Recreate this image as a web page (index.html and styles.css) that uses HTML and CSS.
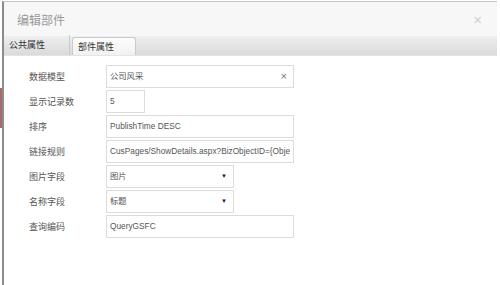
FILE: index.html
```html
<!DOCTYPE html>
<html lang="zh-CN">
<head>
    <meta charset="UTF-8">
    <title>编辑部件</title>
    <link rel="stylesheet" href="styles.css">
</head>
<body>
    <div class="dialog">
        <div class="dialog-header">
            <h1>编辑部件</h1>
            <span class="close-btn">&times;</span>
        </div>

        <div class="tabs">
            <div class="tab">公共属性</div>
            <div class="tab active">部件属性</div>
        </div>

        <div class="form">
            <label>数据模型</label>
            <div class="field wide clearable">公司风采<span class="clear">&times;</span></div>

            <label>显示记录数</label>
            <div class="field short">5</div>

            <label>排序</label>
            <div class="field wide">PublishTime DESC</div>

            <label>链接规则</label>
            <div class="field wide">CusPages/ShowDetails.aspx?BizObjectID={Obje</div>

            <label>图片字段</label>
            <div class="field select">图片<span class="arrow">&#9660;</span></div>

            <label>名称字段</label>
            <div class="field select">标题<span class="arrow">&#9660;</span></div>

            <label>查询编码</label>
            <div class="field wide">QueryGSFC</div>
        </div>
    </div>
</body>
</html>
```

FILE: styles.css
```css
* {
    margin: 0;
    padding: 0;
    box-sizing: border-box;
}

body {
    font-family: "Liberation Sans", "Noto Sans CJK SC", sans-serif;
    background: linear-gradient(to bottom, #fff 0, #fff 88px, #a86a6a 88px, #a86a6a 128px, #fff 128px);
    background-size: 2px 100%;
    background-repeat: no-repeat;
    background-color: #fff;
    height: 285px;
    padding: 1px 3px 0 2px;
    overflow: hidden;
}

.dialog {
    height: 100%;
    border-left: 2px solid #8c8c8c;
    border-top: 1px solid #c4c4c4;
    background: #fff;
}

.dialog-header {
    height: 34px;
    background: #f7f7f7;
    display: flex;
    align-items: center;
    justify-content: space-between;
    padding: 0 15px 0 13px;
}

.dialog-header h1 {
    font-size: 12px;
    font-weight: normal;
    color: #9a9a9a;
    font-family: "Noto Sans CJK SC", sans-serif;
}

.close-btn {
    font-size: 15px;
    color: #d0d0d0;
    line-height: 1;
}

.tabs {
    height: 20px;
    display: flex;
    align-items: flex-end;
    background: linear-gradient(to bottom, #efefef, #dadada);
    border-bottom: 1px solid #e4e4e4;
}

.tab {
    height: 20px;
    width: 66px;
    padding: 0 5px;
    font-size: 9px;
    line-height: 19px;
    color: #333;
    font-family: "Noto Sans CJK SC", sans-serif;
    border-right: 1px solid #c9c9c9;
}

.tab.active {
    height: 18px;
    width: 64px;
    margin-left: 2px;
    line-height: 17px;
    border: 1px solid #cacaca;
    border-bottom: none;
    border-radius: 3px 3px 0 0;
    background: linear-gradient(to bottom, #fdfdfd, #f1f1f1);
}

.form {
    display: grid;
    grid-template-columns: 77px auto;
    row-gap: 2px;
    align-items: center;
    justify-items: start;
    padding: 9px 0 0 25px;
}

.form label {
    font-size: 9px;
    color: #555;
    font-family: "Noto Sans CJK SC", sans-serif;
}

.field {
    position: relative;
    height: 23px;
    border: 1px solid #dcdcdc;
    padding: 0 5px 0 3px;
    font-size: 8.3px;
    line-height: 21px;
    color: #555;
    white-space: nowrap;
    overflow: hidden;
    font-family: "Liberation Sans", "Noto Sans CJK SC", sans-serif;
}

.field.wide {
    width: 188px;
    padding-right: 1px;
}

.field.short {
    width: 39px;
}

.field.select {
    width: 128px;
}

.clear {
    position: absolute;
    right: 6px;
    top: 0;
    font-size: 11px;
    color: #777;
}

.arrow {
    position: absolute;
    right: 6px;
    top: 0;
    font-size: 6px;
    color: #222;
}
```
